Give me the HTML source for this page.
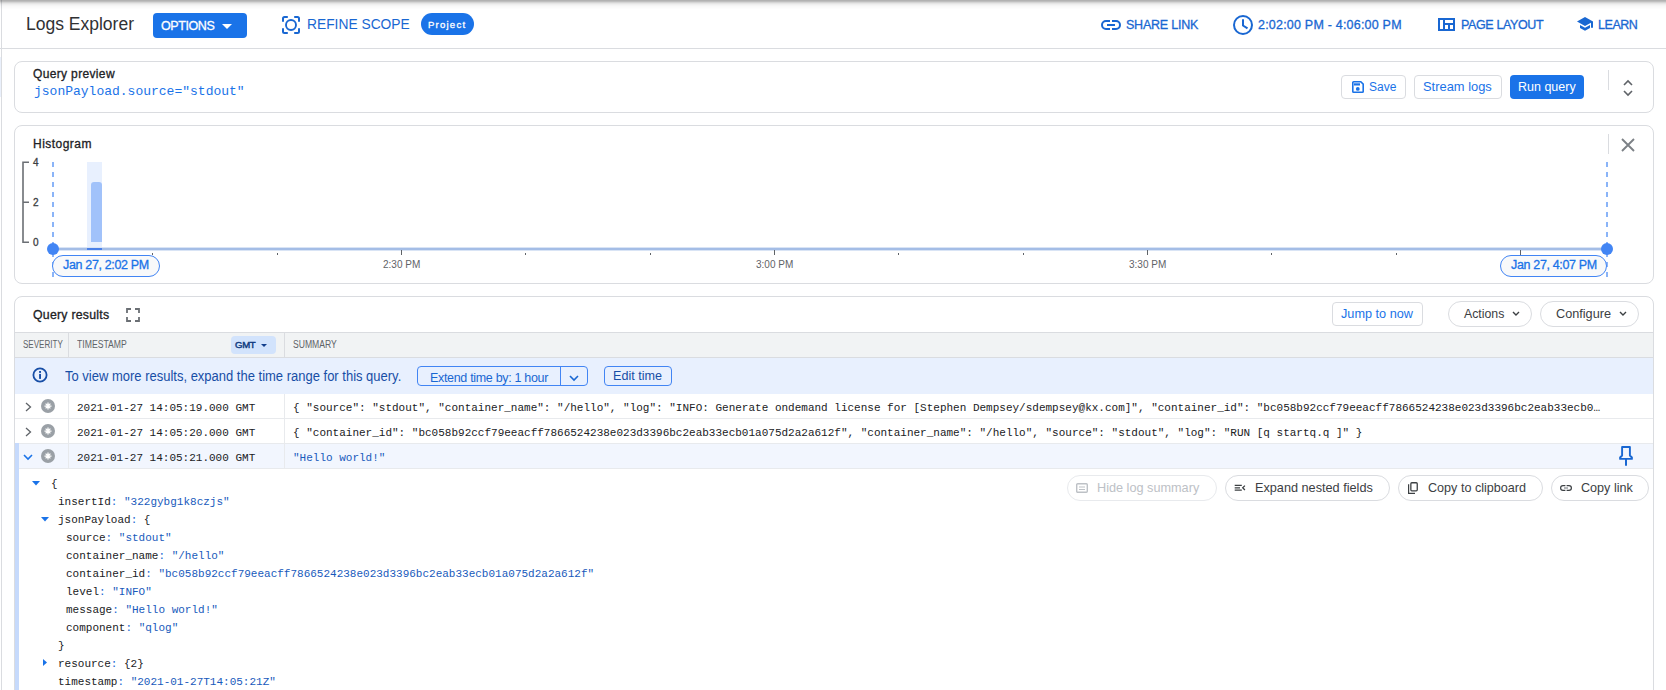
<!DOCTYPE html>
<html><head><meta charset="utf-8">
<style>
*{box-sizing:border-box;margin:0;padding:0}
html,body{width:1666px;height:690px;overflow:hidden;background:#fff;font-family:"Liberation Sans",sans-serif;color:#202124}
.a{position:absolute;white-space:nowrap}
.t{position:absolute;white-space:nowrap;line-height:1}
.m{font-family:"Liberation Mono",monospace}
.b{font-weight:bold}
.md{-webkit-text-stroke-width:0.3px}
.card{position:absolute;border:1px solid #dadce0;border-radius:8px;background:#fff}
.btn{position:absolute;border:1px solid #dadce0;border-radius:4px;background:#fff}
.pill{position:absolute;border:1px solid #dadce0;border-radius:14px;background:#fff}
svg{position:absolute;overflow:visible}
</style></head><body>
<!-- top shadow -->
<!-- left border -->
<div class="a" style="left:1px;top:0;width:1px;height:690px;background:#dadce0"></div>
<div class="a" style="left:0;top:0;width:1666px;height:10px;background:linear-gradient(rgba(0,0,0,0.30) 0.5px,rgba(0,0,0,0.25) 1.5px,rgba(0,0,0,0.165) 2.5px,rgba(0,0,0,0.10) 3.5px,rgba(0,0,0,0.063) 4.5px,rgba(0,0,0,0.04) 5.5px,rgba(0,0,0,0.024) 6.5px,rgba(0,0,0,0.016) 7.5px,rgba(0,0,0,0.008) 8.5px,rgba(0,0,0,0) 9.5px)"></div>
<!-- header border -->
<div class="a" style="left:0;top:48px;width:1666px;height:1px;background:#dadce0"></div>
<div class="a" style="left:0;top:57px;width:1px;height:40px;background:#eaf0fb"></div>

<!-- HEADER -->
<div class="t" style="left:26px;top:16px;font-size:17.5px;color:#303134">Logs Explorer</div>
<div class="a" style="left:153px;top:13px;width:94px;height:25px;background:#1a73e8;border-radius:4px"></div>
<div class="t md" style="left:161px;top:20px;font-size:12.5px;letter-spacing:-0.41px;color:#fff">OPTIONS</div>
<svg style="left:222px;top:24px" width="10" height="5"><path d="M0 0H10L5 5Z" fill="#fff"/></svg>

<svg style="left:282px;top:16px" width="18" height="18" viewBox="0 0 18 18"><path d="M1 5.8V2.5A1.5 1.5 0 0 1 2.5 1H5.8M12.2 1H15.5A1.5 1.5 0 0 1 17 2.5V5.8M17 12.2V15.5A1.5 1.5 0 0 1 15.5 17H12.2M5.8 17H2.5A1.5 1.5 0 0 1 1 15.5V12.2" fill="none" stroke="#1967d2" stroke-width="2"/><circle cx="9" cy="9" r="5" fill="none" stroke="#1967d2" stroke-width="1.9"/></svg>
<div class="t" style="left:307px;top:18px;font-size:13.8px;color:#1967d2">REFINE SCOPE</div>
<div class="a" style="left:421px;top:13px;width:53px;height:22px;background:#1a73e8;border-radius:11px"></div>
<div class="t md" style="left:428px;top:19.5px;font-size:9.6px;letter-spacing:1.2px;color:#fff">Project</div>

<svg style="left:1101px;top:20px" width="20" height="10" viewBox="0 0 20 10"><path d="M9 1H5A4 4 0 0 0 5 9H9M11 1H15A4 4 0 0 1 15 9H11M6 5H14" fill="none" stroke="#1967d2" stroke-width="2"/></svg>
<div class="t md" style="left:1126px;top:19px;font-size:12.5px;letter-spacing:-0.22px;color:#1967d2">SHARE LINK</div>
<svg style="left:1233px;top:15px" width="20" height="20" viewBox="0 0 20 20"><circle cx="10" cy="10" r="9" fill="none" stroke="#1967d2" stroke-width="2"/><path d="M10 4.2V10.5L14.5 13.3" fill="none" stroke="#1967d2" stroke-width="2"/></svg>
<div class="t md" style="left:1258px;top:19px;font-size:12.5px;letter-spacing:0.21px;color:#1967d2">2:02:00 PM - 4:06:00 PM</div>
<svg style="left:1438px;top:18px" width="17" height="13" viewBox="0 0 17 13"><path d="M1 1H16V12H1Z M6 1V12 M6 6H16 M11 6V12" fill="none" stroke="#1967d2" stroke-width="2"/></svg>
<div class="t md" style="left:1461px;top:19px;font-size:12.5px;letter-spacing:-0.37px;color:#1967d2">PAGE LAYOUT</div>
<svg style="left:1577px;top:17px" width="16" height="14" viewBox="0 0 16 14"><path d="M8 0L0 4.5L8 9L14 5.7V10.8H16V4.5Z" fill="#1967d2"/><path d="M3 8V11L8 13.8L13 11V8L8 10.8Z" fill="#1967d2"/></svg>
<div class="t md" style="left:1598px;top:19px;font-size:12.5px;letter-spacing:-0.45px;color:#1967d2">LEARN</div>

<!-- QUERY PREVIEW -->
<div class="card" style="left:14px;top:61px;width:1640px;height:52px"></div>
<div class="t md" style="left:33px;top:68px;font-size:12px;letter-spacing:0.35px;color:#202124">Query preview</div>
<div class="t m" style="left:34px;top:85px;font-size:13px;color:#1a73e8">jsonPayload.source="stdout"</div>
<div class="btn" style="left:1341px;top:75px;width:65px;height:24px"></div>
<svg style="left:1352px;top:81px" width="12" height="12" viewBox="0 0 12 12"><path d="M1.8 0.8H8.8L11.2 3.2V10.4A0.8 0.8 0 0 1 10.4 11.2H1.6A0.8 0.8 0 0 1 0.8 10.4V1.6A0.8 0.8 0 0 1 1.6 0.8Z" fill="none" stroke="#1a73e8" stroke-width="1.6"/><rect x="2" y="2.3" width="6" height="2.2" fill="#1a73e8"/><circle cx="5.8" cy="7.9" r="1.9" fill="#1a73e8"/></svg>
<div class="t" style="left:1369px;top:81px;font-size:12px;color:#1a73e8">Save</div>
<div class="btn" style="left:1414px;top:75px;width:88px;height:24px"></div>
<div class="t" style="left:1423px;top:81px;font-size:12.9px;color:#1a73e8">Stream logs</div>
<div class="a" style="left:1510px;top:75px;width:74px;height:24px;background:#1a73e8;border-radius:4px"></div>
<div class="t" style="left:1518px;top:81px;font-size:12.5px;color:#fff">Run query</div>
<div class="a" style="left:1608px;top:70px;width:1px;height:20px;background:#dadce0"></div>
<svg style="left:1623px;top:80px" width="10" height="16" viewBox="0 0 10 16"><path d="M1 5L5 1L9 5M1 11L5 15L9 11" fill="none" stroke="#5f6368" stroke-width="1.6"/></svg>

<!-- HISTOGRAM -->
<div class="card" style="left:14px;top:125px;width:1640px;height:159px"></div>
<div class="t md" style="left:33px;top:138px;font-size:12px;letter-spacing:0.47px;color:#202124">Histogram</div>
<div class="a" style="left:1608px;top:134px;width:1px;height:20px;background:#dadce0"></div>
<svg style="left:1621px;top:138px" width="14" height="14" viewBox="0 0 14 14"><path d="M1 1L13 13M13 1L1 13" stroke="#7c8186" stroke-width="1.9"/></svg>
<!-- y axis -->
<svg style="left:0;top:0" width="40" height="260" viewBox="0 0 40 260"><path d="M29 162.2H23V242.2H29M23 202.2H29" fill="none" stroke="#6b6f74" stroke-width="1.6"/></svg>
<div class="t md" style="left:33px;top:158px;font-size:10px;color:#3c4043">4</div>
<div class="t md" style="left:33px;top:198px;font-size:10px;color:#3c4043">2</div>
<div class="t md" style="left:33px;top:238px;font-size:10px;color:#3c4043">0</div>
<!-- bar -->
<div class="a" style="left:87px;top:162px;width:15px;height:88px;background:#e8f0fe"></div>
<div class="a" style="left:91px;top:182px;width:11px;height:60px;background:#a1c2fa;border-radius:3px 3px 0 0"></div>
<!-- axis -->
<div class="a" style="left:53px;top:247px;width:1554px;height:4px;background:linear-gradient(#d9e4f5 0 1px,#a4bde6 1px 3px,#d9e4f5 3px 4px)"></div>
<div class="a" style="left:87px;top:248px;width:15px;height:2px;background:#4a80e8"></div>
<!-- dashed -->
<div class="a" style="left:52px;top:162px;width:2px;height:115px;background:repeating-linear-gradient(#8ab4f8 0 5px,transparent 5px 10px)"></div>
<div class="a" style="left:1606px;top:162px;width:2px;height:115px;background:repeating-linear-gradient(#8ab4f8 0 5px,transparent 5px 10px)"></div>
<div class="a" style="left:152px;top:253px;width:1px;height:2px;background:#5f6368"></div>
<div class="a" style="left:277px;top:253px;width:1px;height:2px;background:#5f6368"></div>
<div class="a" style="left:401px;top:250px;width:1px;height:5px;background:#5f6368"></div>
<div class="a" style="left:525px;top:253px;width:1px;height:2px;background:#5f6368"></div>
<div class="a" style="left:650px;top:253px;width:1px;height:2px;background:#5f6368"></div>
<div class="a" style="left:774px;top:250px;width:1px;height:5px;background:#5f6368"></div>
<div class="a" style="left:898px;top:253px;width:1px;height:2px;background:#5f6368"></div>
<div class="a" style="left:1023px;top:253px;width:1px;height:2px;background:#5f6368"></div>
<div class="a" style="left:1147px;top:250px;width:1px;height:5px;background:#5f6368"></div>
<div class="a" style="left:1271px;top:253px;width:1px;height:2px;background:#5f6368"></div>
<div class="a" style="left:1396px;top:253px;width:1px;height:2px;background:#5f6368"></div>
<div class="a" style="left:1520px;top:250px;width:1px;height:5px;background:#5f6368"></div>
<div class="a" style="left:47px;top:243px;width:12px;height:12px;border-radius:6px;background:#4285f4"></div>
<div class="a" style="left:1601px;top:243px;width:12px;height:12px;border-radius:6px;background:#4285f4"></div>
<div class="t" style="left:383px;top:260px;font-size:10px;color:#5f6368">2:30 PM</div>
<div class="t" style="left:756px;top:260px;font-size:10px;color:#5f6368">3:00 PM</div>
<div class="t" style="left:1129px;top:260px;font-size:10px;color:#5f6368">3:30 PM</div>
<div class="a" style="left:52px;top:255px;width:108px;height:22px;border:1.5px solid #4285f4;border-radius:11px;background:#f8f9fa"></div>
<div class="t md" style="left:63px;top:259px;font-size:12.5px;letter-spacing:-0.34px;color:#1a73e8">Jan 27, 2:02 PM</div>
<div class="a" style="left:1500px;top:255px;width:107px;height:22px;border:1.5px solid #4285f4;border-radius:11px;background:#f8f9fa"></div>
<div class="t md" style="left:1511px;top:259px;font-size:12.5px;letter-spacing:-0.34px;color:#1a73e8">Jan 27, 4:07 PM</div>
<!-- QUERY RESULTS -->
<div class="card" style="left:14px;top:296px;width:1640px;height:420px"></div>
<div class="t md" style="left:33px;top:309px;font-size:12.3px;letter-spacing:0.25px;color:#202124">Query results</div>
<svg style="left:126px;top:308px" width="14" height="14" viewBox="0 0 14 14"><path d="M1 5V1H5M9 1H13V5M13 9V13H9M5 13H1V9" fill="none" stroke="#6b6f74" stroke-width="1.8"/></svg>
<div class="btn" style="left:1332px;top:302px;width:91px;height:24px"></div>
<div class="t" style="left:1341px;top:308px;font-size:12.7px;color:#1a73e8">Jump to now</div>
<div class="pill" style="left:1448px;top:301px;width:84px;height:26px;border-radius:13px"></div>
<div class="t" style="left:1464px;top:308px;font-size:12.3px;color:#3c4043">Actions</div>
<svg style="left:1512px;top:311px" width="8" height="5" viewBox="0 0 8 5"><path d="M1 1L4 4L7 1" fill="none" stroke="#3c4043" stroke-width="1.4"/></svg>
<div class="pill" style="left:1540px;top:301px;width:99px;height:26px;border-radius:13px"></div>
<div class="t" style="left:1556px;top:308px;font-size:12.7px;color:#3c4043">Configure</div>
<svg style="left:1619px;top:311px" width="8" height="5" viewBox="0 0 8 5"><path d="M1 1L4 4L7 1" fill="none" stroke="#3c4043" stroke-width="1.4"/></svg>
<!-- table header -->
<div class="a" style="left:15px;top:332px;width:1638px;height:26px;background:#f1f3f4;border-top:1px solid #dadce0;border-bottom:1px solid #dadce0"></div>
<div class="a" style="left:68px;top:333px;width:1px;height:24px;background:#dadce0"></div>
<div class="a" style="left:284px;top:333px;width:1px;height:24px;background:#dadce0"></div>
<div class="t" style="left:23px;top:340px;font-size:10px;color:#5f6368;transform:scaleX(0.804);transform-origin:0 0">SEVERITY</div>
<div class="t" style="left:77px;top:340px;font-size:10px;color:#5f6368;transform:scaleX(0.865);transform-origin:0 0">TIMESTAMP</div>
<div class="a" style="left:231px;top:336px;width:45px;height:18px;background:#d2e3fc;border-radius:4px"></div>
<div class="t md" style="left:235px;top:339.5px;font-size:9.6px;letter-spacing:-0.3px;color:#0f3a80;-webkit-text-stroke-width:0.45px">GMT</div>
<svg style="left:261px;top:344px" width="6" height="3" viewBox="0 0 6 3"><path d="M0 0H6L3 3Z" fill="#123f8c"/></svg>
<div class="t" style="left:293px;top:340px;font-size:10px;color:#5f6368;transform:scaleX(0.86);transform-origin:0 0">SUMMARY</div>
<!-- banner -->
<div class="a" style="left:15px;top:358px;width:1638px;height:36px;background:#e8f0fe"></div>
<svg style="left:32px;top:367px" width="16" height="16" viewBox="0 0 16 16"><circle cx="8" cy="8" r="6.6" fill="none" stroke="#174ea6" stroke-width="1.8"/><rect x="7.1" y="4" width="1.9" height="1.9" fill="#174ea6"/><rect x="7.1" y="6.9" width="1.9" height="5" fill="#174ea6"/></svg>
<div class="t" style="left:65px;top:369px;font-size:14px;color:#174ea6;transform:scaleX(0.928);transform-origin:0 0">To view more results, expand the time range for this query.</div>
<div class="a" style="left:417px;top:366px;width:171px;height:20px;border:1px solid #4285f4;border-radius:4px"></div>
<div class="a" style="left:560px;top:367px;width:1px;height:18px;background:#4285f4"></div>
<div class="t" style="left:430px;top:372px;font-size:12.5px;letter-spacing:-0.32px;color:#1967d2">Extend time by: 1 hour</div>
<svg style="left:569px;top:375px" width="10" height="6" viewBox="0 0 10 6"><path d="M1 1L5 5L9 1" fill="none" stroke="#1967d2" stroke-width="1.6"/></svg>
<div class="a" style="left:604px;top:366px;width:68px;height:20px;border:1px solid #4285f4;border-radius:4px"></div>
<div class="t" style="left:613px;top:370px;font-size:12.6px;color:#174ea6">Edit time</div>
<!-- rows -->
<div class="a" style="left:15px;top:418px;width:1638px;height:1px;background:#e8eaed"></div>
<div class="a" style="left:15px;top:443px;width:1638px;height:26px;background:#f2f6fe;border-top:1px solid #e8eaed;border-bottom:1px solid #e8eaed"></div>
<div class="a" style="left:68px;top:394px;width:1px;height:74px;background:#e8eaed"></div>
<div class="a" style="left:284px;top:394px;width:1px;height:74px;background:#e8eaed"></div>
<div class="a" style="left:15px;top:443px;width:4px;height:260px;background:#c6dafc"></div>
<svg style="left:25px;top:402px" width="7" height="10" viewBox="0 0 7 10"><path d="M1 1L5.5 5L1 9" fill="none" stroke="#5f6368" stroke-width="1.3"/></svg>
<svg style="left:25px;top:427px" width="7" height="10" viewBox="0 0 7 10"><path d="M1 1L5.5 5L1 9" fill="none" stroke="#5f6368" stroke-width="1.3"/></svg>
<svg style="left:23px;top:454px" width="10" height="7" viewBox="0 0 10 7"><path d="M1 1L5 5L9 1" fill="none" stroke="#1a73e8" stroke-width="1.6"/></svg>
<svg style="left:41px;top:399px" width="14" height="14" viewBox="0 0 14 14"><circle cx="7" cy="7" r="7" fill="#9aa0a6"/><path d="M7 3.5V10.5M3.5 7H10.5M4.6 4.6L9.4 9.4M4.6 9.4L9.4 4.6" stroke="#fff" stroke-width="1.25"/></svg><svg style="left:41px;top:424px" width="14" height="14" viewBox="0 0 14 14"><circle cx="7" cy="7" r="7" fill="#9aa0a6"/><path d="M7 3.5V10.5M3.5 7H10.5M4.6 4.6L9.4 9.4M4.6 9.4L9.4 4.6" stroke="#fff" stroke-width="1.25"/></svg><svg style="left:41px;top:449px" width="14" height="14" viewBox="0 0 14 14"><circle cx="7" cy="7" r="7" fill="#9aa0a6"/><path d="M7 3.5V10.5M3.5 7H10.5M4.6 4.6L9.4 9.4M4.6 9.4L9.4 4.6" stroke="#fff" stroke-width="1.25"/></svg>
<div class="t m" style="left:77px;top:403px;font-size:11px;color:#202124">2021-01-27 14:05:19.000 GMT</div>
<div class="t m" style="left:77px;top:428px;font-size:11px;color:#202124">2021-01-27 14:05:20.000 GMT</div>
<div class="t m" style="left:77px;top:453px;font-size:11px;color:#202124">2021-01-27 14:05:21.000 GMT</div>
<div class="t m" style="left:293px;top:403px;font-size:11px;color:#202124">{ &quot;source&quot;: &quot;stdout&quot;, &quot;container_name&quot;: &quot;/hello&quot;, &quot;log&quot;: &quot;INFO: Generate ondemand license for [Stephen Dempsey/sdempsey@kx.com]&quot;, &quot;container_id&quot;: &quot;bc058b92ccf79eeacff7866524238e023d3396bc2eab33ecb0…</div>
<div class="t m" style="left:293px;top:428px;font-size:11px;color:#202124">{ &quot;container_id&quot;: &quot;bc058b92ccf79eeacff7866524238e023d3396bc2eab33ecb01a075d2a2a612f&quot;, &quot;container_name&quot;: &quot;/hello&quot;, &quot;source&quot;: &quot;stdout&quot;, &quot;log&quot;: &quot;RUN [q startq.q ]&quot; }</div>
<div class="t m" style="left:293px;top:453px;font-size:11px;color:#185abc">&quot;Hello world!&quot;</div>
<svg style="left:1619px;top:446px" width="14" height="20" viewBox="0 0 14 20"><path d="M3.1 1H10.9V9.5L12.9 11.5V12.9H1.1V11.5L3.1 9.5Z" fill="none" stroke="#1967d2" stroke-width="1.9" stroke-linejoin="round"/><path d="M7 13V19.7" stroke="#1967d2" stroke-width="2"/></svg>
<svg style="left:32px;top:481px" width="8" height="5" viewBox="0 0 8 5"><path d="M0 0H8L4 4.5Z" fill="#1a73e8"/></svg>
<div class="t m" style="left:51px;top:479px;font-size:11px;color:#202124">{</div>
<div class="t m" style="left:58px;top:497px;font-size:11px;color:#202124">insertId<span style="color:#1967d2">: </span><span style="color:#185abc">&quot;322gybg1k8czjs&quot;</span></div>
<svg style="left:41px;top:517px" width="8" height="5" viewBox="0 0 8 5"><path d="M0 0H8L4 4.5Z" fill="#1a73e8"/></svg>
<div class="t m" style="left:58px;top:515px;font-size:11px;color:#202124">jsonPayload<span style="color:#1967d2">: </span>{</div>
<div class="t m" style="left:66px;top:533px;font-size:11px;color:#202124">source<span style="color:#1967d2">: </span><span style="color:#185abc">&quot;stdout&quot;</span></div>
<div class="t m" style="left:66px;top:551px;font-size:11px;color:#202124">container_name<span style="color:#1967d2">: </span><span style="color:#185abc">&quot;/hello&quot;</span></div>
<div class="t m" style="left:66px;top:569px;font-size:11px;color:#202124">container_id<span style="color:#1967d2">: </span><span style="color:#185abc">&quot;bc058b92ccf79eeacff7866524238e023d3396bc2eab33ecb01a075d2a2a612f&quot;</span></div>
<div class="t m" style="left:66px;top:587px;font-size:11px;color:#202124">level<span style="color:#1967d2">: </span><span style="color:#185abc">&quot;INFO&quot;</span></div>
<div class="t m" style="left:66px;top:605px;font-size:11px;color:#202124">message<span style="color:#1967d2">: </span><span style="color:#185abc">&quot;Hello world!&quot;</span></div>
<div class="t m" style="left:66px;top:623px;font-size:11px;color:#202124">component<span style="color:#1967d2">: </span><span style="color:#185abc">&quot;qlog&quot;</span></div>
<div class="t m" style="left:58px;top:641px;font-size:11px;color:#202124">}</div>
<svg style="left:43px;top:659px" width="5" height="7" viewBox="0 0 5 7"><path d="M0 0V7L4 3.5Z" fill="#1a73e8"/></svg>
<div class="t m" style="left:58px;top:659px;font-size:11px;color:#202124">resource<span style="color:#1967d2">: </span>{2}</div>
<div class="t m" style="left:58px;top:677px;font-size:11px;color:#202124">timestamp<span style="color:#1967d2">: </span><span style="color:#185abc">&quot;2021-01-27T14:05:21Z&quot;</span></div>
<div class="pill" style="left:1067px;top:475px;width:150px;height:26px;border-color:#e8eaed;border-radius:13px"></div>
<svg style="left:1076px;top:483px" width="12" height="10" viewBox="0 0 12 10"><rect x="0.7" y="0.7" width="10.6" height="8.6" rx="1" fill="none" stroke="#bdc1c6" stroke-width="1.4"/><path d="M3 4H9M3 6.5H9" stroke="#bdc1c6" stroke-width="1.2"/></svg>
<div class="t" style="left:1097px;top:482px;font-size:12.7px;color:#bdc1c6">Hide log summary</div>
<div class="pill" style="left:1225px;top:475px;width:165px;height:26px;border-radius:13px"></div>
<svg style="left:1234px;top:483px" width="12" height="10" viewBox="0 0 12 10"><path d="M0.7 2.3H7.8M0.7 4.8H6M0.7 7.2H7.8M10.9 2.6L8.7 4.8L10.9 7" fill="none" stroke="#3c4043" stroke-width="1.3"/></svg>
<div class="t" style="left:1255px;top:482px;font-size:12.7px;color:#3c4043">Expand nested fields</div>
<div class="pill" style="left:1398px;top:475px;width:145px;height:26px;border-radius:13px"></div>
<svg style="left:1407px;top:481px" width="12" height="14" viewBox="0 0 12 14"><path d="M1.6 3.3V12.3H8" fill="none" stroke="#3c4043" stroke-width="1.2"/><rect x="3.85" y="1.75" width="6.4" height="8.1" rx="1" fill="none" stroke="#3c4043" stroke-width="1.3"/></svg>
<div class="t" style="left:1428px;top:482px;font-size:12.6px;color:#3c4043">Copy to clipboard</div>
<div class="pill" style="left:1551px;top:475px;width:98px;height:26px;border-radius:13px"></div>
<svg style="left:1560px;top:485px" width="12" height="6" viewBox="0 0 12 6"><path d="M5.4 0.6H3A2.4 2.4 0 0 0 3 5.4H5.4M6.6 0.6H9A2.4 2.4 0 0 1 9 5.4H6.6" fill="none" stroke="#3c4043" stroke-width="1.2"/><path d="M4 3H8" stroke="#80868b" stroke-width="1.2"/></svg>
<div class="t" style="left:1581px;top:482px;font-size:12.6px;color:#3c4043">Copy link</div>
</body></html>
